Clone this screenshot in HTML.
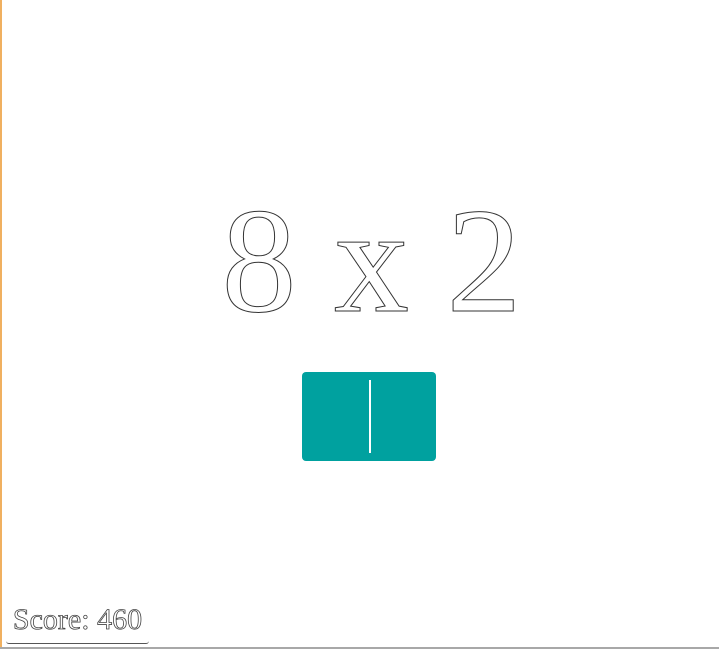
<!DOCTYPE html>
<html><head><style>
html,body{margin:0;padding:0;}
body{width:719px;height:649px;background:#fff;position:relative;overflow:hidden;font-family:"Liberation Serif","Times New Roman",serif;}
.lb{position:absolute;left:0;top:0;width:2px;height:649px;background:#f0b060;}
.bb{position:absolute;left:0;bottom:0;width:719px;height:2px;background:#a8a8a8;}
.q{position:absolute;left:12px;width:719px;top:176px;text-align:center;font-size:150px;line-height:170px;color:#fff;-webkit-text-stroke:1px #333;letter-spacing:0px;white-space:pre;}
.btn{position:absolute;left:302px;top:372px;width:134px;height:89px;background:#00a19f;border-radius:4px;}
.cur{position:absolute;left:67px;top:8px;width:2px;height:73px;background:#fff;}
.score{position:absolute;left:6px;top:595px;width:143px;height:48px;border-bottom:1px solid #555;border-radius:3px;font-size:30px;line-height:50px;text-align:center;color:#fff;-webkit-text-stroke:0.8px #444;}
</style></head><body>
<div class="lb"></div>
<div class="q">8 x 2</div>
<div class="btn"><div class="cur"></div></div>
<div class="score">Score: 460</div>
<div class="bb"></div>
</body></html>
